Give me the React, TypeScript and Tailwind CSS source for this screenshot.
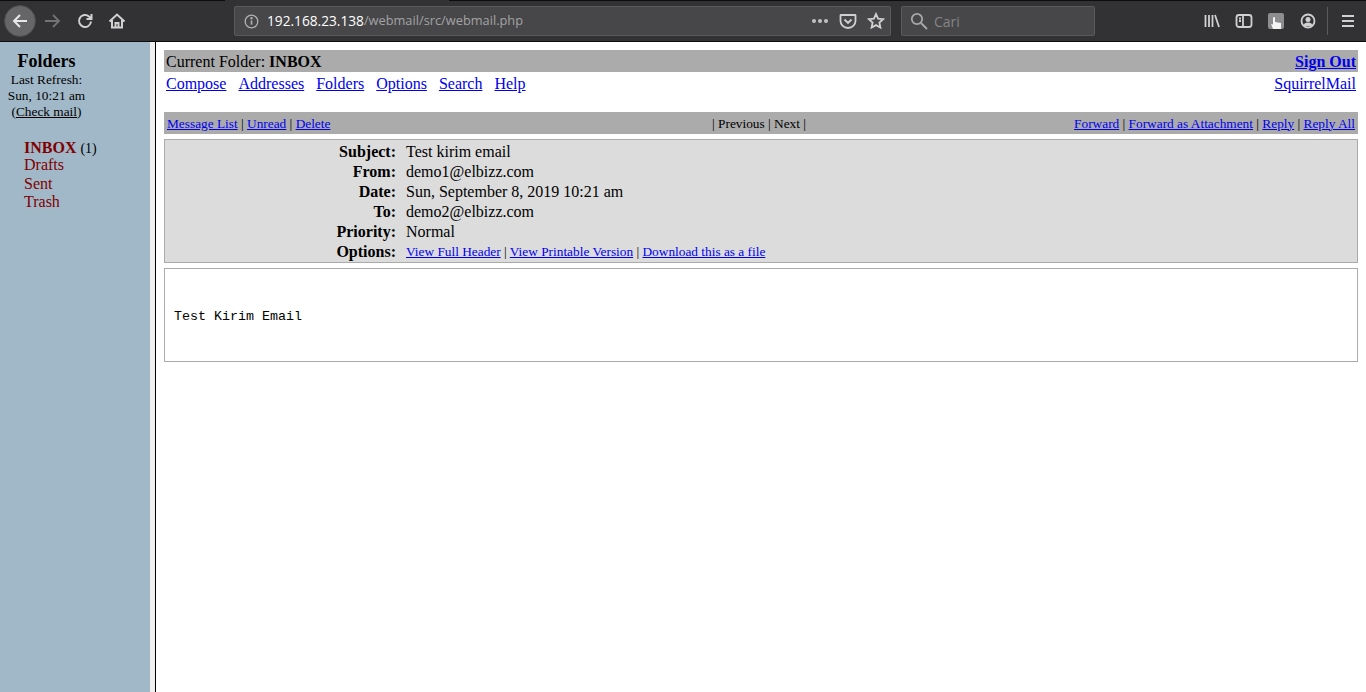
import { ReactNode } from 'react';

const serif = 'font-["Liberation_Serif",serif]';

function L({ children }: { children: ReactNode }) {
  return <a className="text-[#0000ee] underline">{children}</a>;
}

function ToolbarIcon({ children, sw = 1.8 }: { children: ReactNode; sw?: number }) {
  return (
    <svg width={18} height={18} viewBox="0 0 18 18" fill="none" stroke="currentColor" strokeWidth={sw} className="shrink-0">
      {children}
    </svg>
  );
}

function Toolbar() {
  return (
    <div className="h-[42px] bg-[#323234] border-b border-[#0c0c0d] flex flex-col font-['Open_Sans',sans-serif] text-[#d0d0d1] shrink-0">
      {/* leftover tab strip line along the top */}
      <div className="h-px flex shrink-0">
        <div className="w-[225px] bg-[#0c0c0d]" />
        <div className="w-[224px]" />
        <div className="flex-1 bg-[#0c0c0d]" />
      </div>
      <div className="h-[40px] flex items-center">
        <div className="w-[32px] h-[32px] ml-[4px] rounded-full bg-[#666668] flex items-center justify-center border border-[#4a4a4c] shrink-0 text-[#e8e8e8]">
          <ToolbarIcon sw={2}>
            <path d="M16 9H3M9 3L3 9l6 6" />
          </ToolbarIcon>
        </div>
        <div className="ml-[8px] text-[#737374]">
          <ToolbarIcon>
            <path d="M1 9h14M9 3l6 6-6 6" />
          </ToolbarIcon>
        </div>
        <div className="ml-[14px]">
          <ToolbarIcon sw={2}>
            <path d="M15 9.5a6 6 0 1 1-2-5L15 6.5M15.5 2v5h-5" />
          </ToolbarIcon>
        </div>
        <div className="ml-[14px]">
          <ToolbarIcon sw={2}>
            <path d="M1.5 9.5L9 2.5l7.5 7M4 8v7.5h10V8M7.5 15.5V11h3v4.5" />
          </ToolbarIcon>
        </div>
        <div className="ml-[108px] w-[657px] h-[30px] bg-[#474749] border border-[#5a5a5c] rounded-[2px] flex items-center pl-[9px] pr-[5px] shrink-0">
          <svg width="15" height="15" viewBox="0 0 15 15" fill="none" stroke="#b1b1b3" strokeWidth="1.3" className="shrink-0">
            <circle cx="7.5" cy="7.5" r="6.3" />
            <path d="M7.5 6.5v4.2" strokeWidth="1.6" />
            <circle cx="7.5" cy="4.3" r="0.6" fill="#b1b1b3" />
          </svg>
          <span className="ml-[8px] text-[13.7px] text-white">192.168.23.138</span>
          <span className="text-[12.8px] text-[#a3a3a5]">/webmail/src/webmail.php</span>
          <span className="ml-auto flex items-center gap-[2px] mr-[11px]">
            <i className="w-[4px] h-[4px] rounded-full bg-[#c2c2c3]" />
            <i className="w-[4px] h-[4px] rounded-full bg-[#c2c2c3]" />
            <i className="w-[4px] h-[4px] rounded-full bg-[#c2c2c3]" />
          </span>
          <ToolbarIcon>
            <path d="M2 3h14a.5.5 0 0 1 .5.5V9a7.5 7 0 0 1-15 0V3.5A.5.5 0 0 1 2 3zM5.5 7.5L9 11l3.5-3.5" />
          </ToolbarIcon>
          <span className="ml-[10px]">
            <ToolbarIcon>
              <path d="M9 2l2.1 4.6 5 .6-3.7 3.4 1 5L9 13.1 4.6 15.6l1-5L1.9 7.2l5-.6z" />
            </ToolbarIcon>
          </span>
        </div>
        <div className="ml-[10px] w-[194px] h-[30px] bg-[#474749] border border-[#5a5a5c] rounded-[2px] flex items-center pl-[8px] shrink-0">
          <svg width="18" height="18" viewBox="0 0 18 18" fill="none" stroke="#a8a8a9" strokeWidth="1.8" className="shrink-0">
            <circle cx="7" cy="7" r="5.2" />
            <path d="M11 11l6 6" />
          </svg>
          <span className="ml-[6px] text-[14px] text-[#858586]">Cari</span>
        </div>
        <div className="ml-[108px]">
          <ToolbarIcon>
            <path d="M2.5 3v12M6 3v12M9.5 3v12M12 3l4 12" />
          </ToolbarIcon>
        </div>
        <div className="ml-[14px]">
          <ToolbarIcon>
            <rect x="1.5" y="3" width="15" height="12" rx="2.5" />
            <path d="M8 3v12M4 6.5h2M4 9h2" />
          </ToolbarIcon>
        </div>
        <div className="ml-[15px] w-[16px] h-[16px] rounded-[2px] bg-[#8d8d8f] flex items-end justify-center overflow-hidden shrink-0">
          <svg width="12" height="14" viewBox="0 0 12 14">
            <path d="M3 14L1 9l2 .5V3a1 1 0 0 1 2 0v4l6 1v6z" fill="#f4f4f4" />
          </svg>
        </div>
        <div className="ml-[16px]">
          <svg width="16" height="16" viewBox="0 0 16 16" className="shrink-0">
            <circle cx="8" cy="8" r="6.5" fill="none" stroke="currentColor" strokeWidth="1.8" />
            <circle cx="8" cy="6.5" r="2.5" fill="currentColor" />
            <path d="M3.5 13a4.5 3.5 0 0 1 9 0z" fill="currentColor" />
          </svg>
        </div>
        <div className="ml-[11px] w-px h-[28px] bg-[#5a5a5c]" />
        <div className="ml-[13px]">
          <svg width="14" height="14" viewBox="0 0 14 14" stroke="currentColor" strokeWidth="1.8">
            <path d="M1 2h12M1 7h12M1 12h12" />
          </svg>
        </div>
      </div>
    </div>
  );
}

function Sidebar() {
  return (
    <div className="w-[150px] shrink-0 bg-[#a0b8c8] text-black text-[13.33px] leading-[16px]">
      <div className="text-center pt-[9px] w-[93px]">
        <div className="text-[18px] leading-[20px] font-bold">Folders</div>
        <div className="mt-[1px]">Last Refresh:</div>
        <div>Sun, 10:21 am</div>
        <div>
          (<span className="underline">Check mail</span>)
        </div>
      </div>
      <div className="ml-[24px] mt-[19px] text-[16px] text-[#800000] leading-[18.3px]">
        {/* first row is a touch shorter than the others */}
        <div className="h-[17.3px]">
          <span className="font-bold">INBOX</span> <span className="text-[14px] text-black">(1)</span>
        </div>
        <div>Drafts</div>
        <div>Sent</div>
        <div>Trash</div>
      </div>
    </div>
  );
}

function HeaderRow({ label, small, children }: { label: string; small?: boolean; children: ReactNode }) {
  return (
    <div className={`flex h-[20px] text-[16px] leading-[20px] ${small ? 'items-start' : 'items-baseline'}`}>
      <div className="w-[231px] text-right font-bold">{label}</div>
      <div className={`ml-[10px] ${small ? 'text-[13.33px]' : ''}`}>{children}</div>
    </div>
  );
}

function Main() {
  return (
    <div className="flex-1 min-w-0 bg-white text-black px-[8px] pt-[8px] text-[16px]">
      <div className="bg-[#ababab] h-[22px] flex items-center justify-between px-[2px] pt-px">
        <div>
          Current Folder: <b>INBOX</b>
        </div>
        <a className="font-bold text-[#0000ee] underline">Sign Out</a>
      </div>
      <div className="h-[40px] flex justify-between px-[2px] pt-[2px] leading-[20px]">
        <div className="flex gap-[12px]">
          <L>Compose</L>
          <L>Addresses</L>
          <L>Folders</L>
          <L>Options</L>
          <L>Search</L>
          <L>Help</L>
        </div>
        <L>SquirrelMail</L>
      </div>
      <div className="bg-[#ababab] h-[22px] flex items-center justify-between px-[3px] pt-px text-[13.33px]">
        <div className="w-[420px]">
          <L>Message List</L> | <L>Unread</L> | <L>Delete</L>
        </div>
        <div>| Previous | Next |</div>
        <div className="w-[424px] text-right">
          <L>Forward</L> | <L>Forward as Attachment</L> | <L>Reply</L> | <L>Reply All</L>
        </div>
      </div>
      <div className="mt-[5px] bg-[#dcdcdc] border border-[#ababab] h-[124px] pt-[2px]">
        <HeaderRow label="Subject:">Test kirim email</HeaderRow>
        <HeaderRow label="From:">demo1@elbizz.com</HeaderRow>
        <HeaderRow label="Date:">Sun, September 8, 2019 10:21 am</HeaderRow>
        <HeaderRow label="To:">demo2@elbizz.com</HeaderRow>
        <HeaderRow label="Priority:">Normal</HeaderRow>
        <HeaderRow label="Options:" small>
          <L>View Full Header</L> | <L>View Printable Version</L> | <L>Download this as a file</L>
        </HeaderRow>
      </div>
      <div className="mt-[5px] border border-[#ababab] h-[94px] pl-[9px] pt-[40px] font-['Liberation_Mono',monospace] text-[13.33px] leading-[15px]">
        Test Kirim Email
      </div>
    </div>
  );
}

export default function App() {
  return (
    <div className={`h-[692px] w-[1366px] overflow-hidden flex flex-col bg-white ${serif}`}>
      <Toolbar />
      <div className="flex flex-1 min-h-0">
        <Sidebar />
        <div className="w-[5px] bg-[#f0f0f0] shrink-0" />
        <div className="w-px bg-black shrink-0" />
        <Main />
      </div>
    </div>
  );
}
